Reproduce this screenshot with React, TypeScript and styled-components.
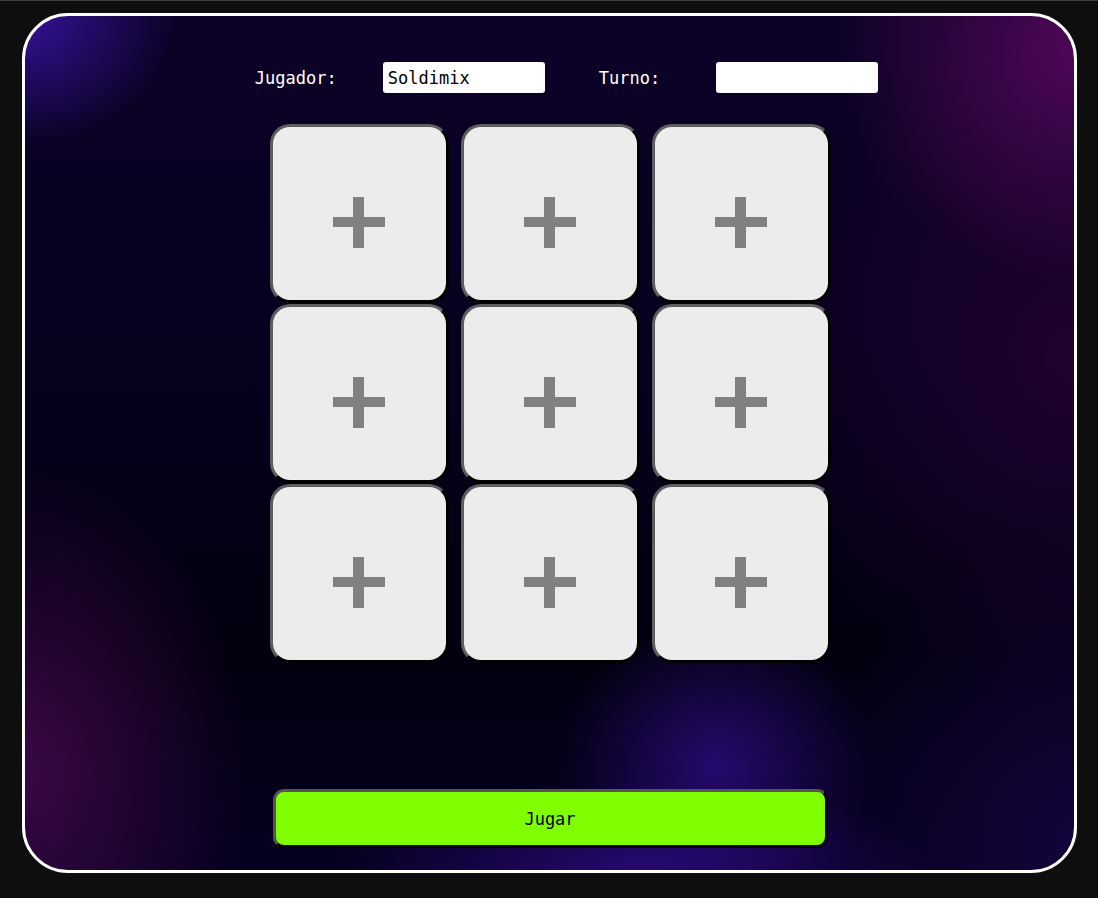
import React from "react";
import styled, { createGlobalStyle } from "styled-components";

const Global = createGlobalStyle`
  html, body { margin: 0; padding: 0; background: #0e0e0e; }
  body { font-family: "DejaVu Sans Mono", "Liberation Mono", monospace; }
  * { box-sizing: border-box; }
`;

const Page = styled.div`
  min-height: 898px;
  border-top: 1px solid #3c3c3c;
  padding-top: 12px;
  display: flex;
  justify-content: center;
`;

const Panel = styled.main`
  width: 1055px;
  height: 860px;
  border: 3px solid #ffffff;
  border-radius: 46px;
  overflow: hidden;
  display: flex;
  flex-direction: column;
  align-items: center;
  padding-top: 46px;
  background:
    radial-gradient(ellipse 150px 130px at 0% 0%, rgba(60, 20, 170, 0.85), transparent 100%),
    radial-gradient(ellipse 240px 230px at 100% 4%, rgba(90, 8, 95, 0.85), transparent 100%),
    radial-gradient(ellipse 220px 300px at 0% 88%, rgba(75, 10, 85, 0.75), transparent 100%),
    radial-gradient(ellipse 160px 150px at 66% 88%, rgba(45, 12, 130, 0.8), transparent 100%),
    radial-gradient(ellipse 300px 90px at 58% 100%, rgba(45, 10, 130, 0.8), transparent 100%),
    radial-gradient(ellipse 320px 340px at 100% 40%, rgba(45, 3, 60, 0.65), transparent 100%),
    radial-gradient(ellipse 260px 300px at 100% 95%, rgba(25, 5, 70, 0.7), transparent 100%),
    linear-gradient(180deg, #0c0228 0%, #06001c 45%, #03000f 75%, #060020 100%);
`;

const Header = styled.div`
  display: flex;
  align-items: center;
  margin-left: 35px;
  height: 31px;
`;

const Label = styled.label<{ $gap: number }>`
  color: #ffffff;
  font-size: 17px;
  margin-right: ${(p) => p.$gap}px;
`;

const Field = styled.input<{ $after?: number }>`
  width: 162px;
  height: 31px;
  border: none;
  border-radius: 3px;
  background: #ffffff;
  color: #000000;
  font-family: "DejaVu Sans Mono", "Liberation Mono", monospace;
  font-size: 17px;
  padding: 0 5px;
  margin-right: ${(p) => p.$after ?? 0}px;
  outline: none;
`;

const Board = styled.div`
  margin-top: 31px;
  margin-left: 2px;
  display: grid;
  grid-template-columns: repeat(3, 179px);
  grid-auto-rows: 179px;
  column-gap: 12px;
  row-gap: 1px;
`;

const Cell = styled.button`
  background: #ececec;
  border-style: solid;
  border-width: 3px;
  border-color: #5e5e5e #000000 #000000 #5e5e5e;
  border-radius: 20px;
  padding: 18px 0 0 0;
  display: flex;
  align-items: center;
  justify-content: center;
  cursor: pointer;
`;

const PlayButton = styled.button`
  margin-top: auto;
  margin-bottom: 22px;
  margin-left: 2px;
  width: 555px;
  height: 59px;
  background: #7fff00;
  border-style: solid;
  border-width: 3px;
  border-color: #555555 #000000 #000000 #555555;
  border-radius: 11px;
  color: #000000;
  font-family: "DejaVu Sans Mono", "Liberation Mono", monospace;
  font-size: 17px;
  cursor: pointer;
`;

const Plus = () => (
  <svg width="52" height="52" viewBox="0 0 52 52" aria-hidden="true">
    <rect x="0" y="20" width="52" height="10" fill="#808080" />
    <rect x="20" y="0" width="11" height="51" fill="#808080" />
  </svg>
);

export default function App() {
  return (
    <>
      <Global />
      <Page>
        <Panel>
          <Header>
            <Label $gap={46}>Jugador:</Label>
            <Field defaultValue="Soldimix" $after={54} />
            <Label $gap={56}>Turno:</Label>
            <Field defaultValue="" />
          </Header>
          <Board>
            {Array.from({ length: 9 }).map((_, i) => (
              <Cell key={i}>
                <Plus />
              </Cell>
            ))}
          </Board>
          <PlayButton>Jugar</PlayButton>
        </Panel>
      </Page>
    </>
  );
}
